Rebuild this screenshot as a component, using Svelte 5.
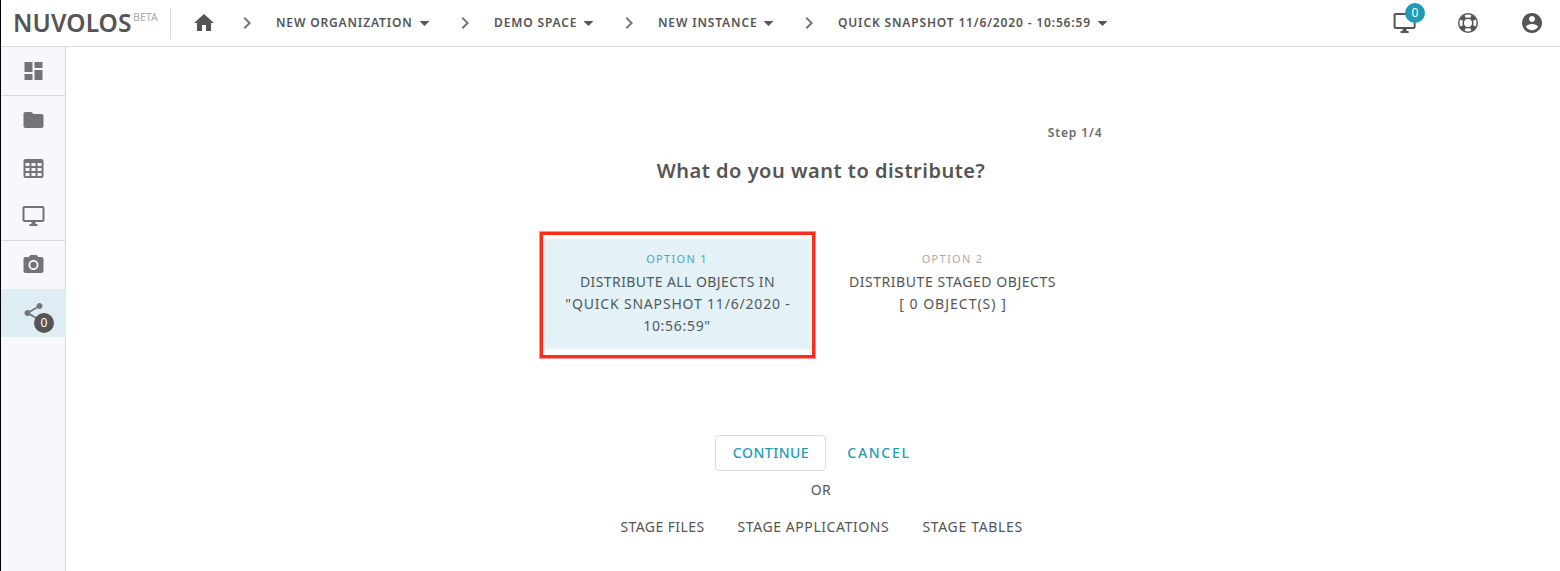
<script>
  const paths = {
    home: 'M10 20v-6h4v6h5v-8h3L12 3 2 12h3v8z',
    chevron: 'M10 6 8.59 7.41 13.17 12l-4.58 4.59L10 18l6-6z',
    caret: 'M7 10l5 5 5-5z',
    monitor: 'M21 2H3c-1.1 0-2 .9-2 2v12c0 1.1.9 2 2 2h7v2H8v2h8v-2h-2v-2h7c1.1 0 2-.9 2-2V4c0-1.1-.9-2-2-2zm0 14H3V4h18v12z',
    lifebuoy: 'M19.79,15.41C20.74,13.24 20.74,10.75 19.79,8.59L17.05,9.83C17.65,11.21 17.65,12.78 17.06,14.17L19.79,15.41M15.42,4.21C13.25,3.26 10.76,3.26 8.59,4.21L9.83,6.94C11.22,6.35 12.79,6.35 14.18,6.95L15.42,4.21M4.21,8.58C3.26,10.76 3.26,13.24 4.21,15.42L6.95,14.17C6.35,12.79 6.35,11.21 6.95,9.82L4.21,8.58M8.59,19.79C10.76,20.74 13.25,20.74 15.42,19.78L14.18,17.05C12.8,17.65 11.22,17.65 9.84,17.06L8.59,19.79M12,2A10,10 0 0,1 22,12A10,10 0 0,1 12,22A10,10 0 0,1 2,12A10,10 0 0,1 12,2M12,8A4,4 0 0,0 8,12A4,4 0 0,0 12,16A4,4 0 0,0 16,12A4,4 0 0,0 12,8Z',
    account: 'M12 2C6.48 2 2 6.48 2 12s4.48 10 10 10 10-4.48 10-10S17.52 2 12 2zm0 3c1.66 0 3 1.34 3 3s-1.34 3-3 3-3-1.34-3-3 1.34-3 3-3zm0 14.2c-2.5 0-4.71-1.28-6-3.22.03-1.99 4-3.08 6-3.08 1.99 0 5.97 1.09 6 3.08-1.29 1.94-3.5 3.22-6 3.22z',
    dashboard: 'M3 13h8V3H3v10zm0 8h8v-6H3v6zm10 0h8V11h-8v10zm0-18v6h8V3h-8z',
    folder: 'M10 4H4c-1.1 0-1.99.9-1.99 2L2 18c0 1.1.9 2 2 2h16c1.1 0 2-.9 2-2V8c0-1.1-.9-2-2-2h-8l-2-2z',
    table: 'M4 3h16a2 2 0 0 1 2 2v15a2 2 0 0 1-2 2H4a2 2 0 0 1-2-2V5a2 2 0 0 1 2-2zM4 7v3h4V7zm6 0v3h4V7zm6 0v3h4V7zM4 12v3h4v-3zm6 0v3h4v-3zm6 0v3h4v-3zM4 17v3h4v-3zm6 0v3h4v-3zm6 0v3h4v-3z',
    camera: 'M9 2L7.17 4H4c-1.1 0-2 .9-2 2v12c0 1.1.9 2 2 2h16c1.1 0 2-.9 2-2V6c0-1.1-.9-2-2-2h-3.17L15 2H9zm3 15c-2.76 0-5-2.24-5-5s2.24-5 5-5 5 2.24 5 5-2.24 5-5 5zM12 8.8a3.2 3.2 0 1 0 0 6.4a3.2 3.2 0 1 0 0-6.4z',
    share: 'M18 16.08c-.76 0-1.44.3-1.96.77L8.91 12.7c.05-.23.09-.46.09-.7s-.04-.47-.09-.7l7.05-4.11c.54.5 1.25.81 2.04.81 1.66 0 3-1.34 3-3s-1.34-3-3-3-3 1.34-3 3c0 .24.04.47.09.7L8.04 9.81C7.5 9.31 6.79 9 6 9c-1.66 0-3 1.34-3 3s1.34 3 3 3c.79 0 1.5-.31 2.04-.81l7.12 4.16c-.05.21-.08.43-.08.65 0 1.61 1.31 2.92 2.92 2.92s2.92-1.31 2.92-2.92-1.31-2.92-2.92-2.92z'
  };

  const crumbs = [
    { label: 'NEW ORGANIZATION', cls: 'org' },
    { label: 'DEMO SPACE', cls: 'space' },
    { label: 'NEW INSTANCE', cls: 'instance' },
    { label: 'QUICK SNAPSHOT 11/6/2020 - 10:56:59', cls: 'snapshot' }
  ];

  const nav = [
    { icon: 'dashboard', divided: true },
    { icon: 'folder' },
    { icon: 'table' },
    { icon: 'monitor', divided: true },
    { icon: 'camera' },
    { icon: 'share', active: true, badge: 0 }
  ];
</script>

{#snippet icon(name)}
  <svg class="icon" viewBox="0 0 24 24" aria-hidden="true"><path fill-rule="evenodd" d={paths[name]} /></svg>
{/snippet}

<div class="app">
  <header>
    <div class="brand"><span class="name">NUVOLOS</span><span class="beta">BETA</span></div>
    <a class="home" href="#home" aria-label="Home">{@render icon('home')}</a>
    <nav class="crumbs">
      {#each crumbs as c}
        <div class="crumb {c.cls}">
          {@render icon('chevron')}
          <span class="label">{c.label}</span>
          {@render icon('caret')}
        </div>
      {/each}
    </nav>
    <div class="actions">
      <span class="action screens">{@render icon('monitor')}<b class="badge teal">0</b></span>
      <span class="action">{@render icon('lifebuoy')}</span>
      <span class="action">{@render icon('account')}</span>
    </div>
  </header>

  <div class="body">
    <aside>
      {#each nav as n}
        <div class="item" class:divided={n.divided} class:active={n.active}>
          <span class="action">
            {@render icon(n.icon)}
            {#if n.badge !== undefined}<b class="badge dark">{n.badge}</b>{/if}
          </span>
        </div>
      {/each}
    </aside>

    <main>
      <div class="step"><span>Step 1/4</span></div>
      <h1>What do you want to distribute?</h1>

      <div class="options">
        <div class="frame">
          <div class="option selected">
            <small>OPTION 1</small>
            <p class="o1a">DISTRIBUTE ALL OBJECTS IN</p>
            <p class="o1b">"QUICK SNAPSHOT 11/6/2020 -</p>
            <p class="o1c">10:56:59"</p>
          </div>
        </div>
        <div class="option second">
          <small>OPTION 2</small>
          <p class="o2a">DISTRIBUTE STAGED OBJECTS</p>
          <p class="o2b">[ 0 OBJECT(S) ]</p>
        </div>
      </div>

      <div class="buttons">
        <button class="continue">CONTINUE</button>
        <button class="cancel">CANCEL</button>
      </div>
      <div class="or">OR</div>
      <div class="stages">
        <span class="files">STAGE FILES</span>
        <span class="apps">STAGE APPLICATIONS</span>
        <span class="tables">STAGE TABLES</span>
      </div>
    </main>
  </div>
</div>

<style>
  :global(body) { margin: 0; background: #fff; }
  .app {
    box-sizing: border-box;
    width: 1560px;
    height: 571px;
    overflow: hidden;
    border-left: 1px solid #000;
    display: flex;
    flex-direction: column;
    font-family: "Noto Sans", "Open Sans", sans-serif;
    font-size: 14px;
    color: #555;
    white-space: nowrap;
  }
  .icon { display: block; flex: none; width: 24px; height: 24px; fill: currentColor; }

  header {
    box-sizing: border-box;
    flex: none;
    height: 47px;
    border-bottom: 1px solid #dcdcdc;
    display: flex;
    align-items: center;
  }
  .brand {
    box-sizing: border-box;
    width: 170px;
    height: 31px;
    padding-left: 12px;
    border-right: 1px solid #dcdcdc;
    display: flex;
    align-items: flex-start;
  }
  .name { width: 120px; font-size: 24.5px; line-height: 29px; font-weight: 600; letter-spacing: 0.1px; }
  .beta { font-size: 10.5px; line-height: 19px; color: #aaa; letter-spacing: 0.1px; }
  .home { color: #555; margin: 0 19px 0 21px; }
  .crumbs { display: flex; }
  .crumb { display: flex; align-items: center; height: 24px; }
  .crumb .label {
    flex: 1;
    margin-left: 17px;
    font-size: 12px;
    line-height: 24px;
    font-weight: 600;
    letter-spacing: 0.85px;
  }
  .crumb .icon:first-child { color: #777; }
  .org { width: 218px; }
  .space { width: 164px; }
  .instance { width: 180px; }
  .snapshot { width: 309px; }
  .crumb .icon:last-child { margin-right: 16px; transform: translateX(-0.5px); }
  .snapshot .icon:last-child { margin-right: 0; }
  .actions { margin-left: auto; margin-right: 16px; display: flex; gap: 40px; }
  .screens .icon { transform: translateX(0.6px); }

  .action { position: relative; display: block; }
  .badge {
    position: absolute;
    width: 20px;
    height: 20px;
    border-radius: 50%;
    color: #fff;
    font-size: 12px;
    line-height: 20px;
    font-weight: 400;
    text-align: center;
  }
  .teal { left: 13px; top: -8px; background: #1f9bb6; }
  .dark { left: 13px; top: 12px; background: #555; }

  .body { flex: 1; display: flex; min-height: 0; }
  aside {
    box-sizing: border-box;
    width: 65px;
    flex: none;
    background: #f6f8fb;
    border-right: 1px solid #d8d8d8;
    color: #737477;
  }
  .item { height: 48px; display: flex; align-items: center; justify-content: center; }
  .item .icon { transform: translateX(0.5px); }
  .divided { border-bottom: 1px solid #d8d8d8; }
  .active { background: #deedf4; margin-right: -1px; padding-right: 1px; }

  main { flex: 1; display: flex; flex-direction: column; align-items: center; padding: 76px 0 0 15px; }
  .step {
    width: 564px;
    height: 20px;
    line-height: 20px;
    text-align: right;
    font-size: 12px;
    font-weight: 600;
    letter-spacing: 0.9px;
    color: #6a6a6a;
  }
  h1 {
    margin: 10px 0 0;
    padding-left: 1px;
    font-size: 20px;
    line-height: 36px;
    font-weight: 600;
    letter-spacing: 0.5px;
  }
  .options { display: flex; width: 564px; margin-top: 42px; }
  .frame {
    box-sizing: border-box;
    width: 275px;
    height: 126px;
    margin: 1px;
    border: 3px solid #fc2d1d;
    box-shadow: 0 0 0 1px rgba(252, 45, 29, 0.5);
    padding-top: 4px;
  }
  .option { text-align: center; }
  .option small { display: block; font-size: 11px; line-height: 20px; height: 22px; letter-spacing: 1.3px; color: #aaa; }
  .option p { margin: 0; line-height: 22px; }
  .option .o1a { letter-spacing: 0.42px; padding-left: 1px; }
  .option .o1b { letter-spacing: 0.82px; padding-left: 2px; }
  .option .o1c { letter-spacing: 0.7px; }
  .option .o2a { letter-spacing: 0.55px; }
  .option .o2b { letter-spacing: 1px; padding-left: 1px; }
  .selected { box-sizing: border-box; height: 110px; padding-top: 10px; background: #e4f1f6; color: #4f5a5e; }
  .selected small { color: #41abc5; }
  .second { width: 274px; padding-top: 18px; }
  .buttons { display: flex; margin-top: 76px; width: 212px; }
  button {
    box-sizing: border-box;
    flex: none;
    height: 36px;
    padding: 0 0 2px;
    background: none;
    border: 0;
    color: #1f9bb6;
    font: 500 14px "Noto Sans", "Open Sans", sans-serif;
    text-align: center;
  }
  .continue {
    width: 111px;
    padding-left: 2px;
    border: 1px solid #dcdcdc;
    border-radius: 4px;
    letter-spacing: 0.5px;
  }
  .cancel { width: 107px; letter-spacing: 1.7px; }
  .or { margin-top: 9px; padding-left: 1px; line-height: 20px; letter-spacing: 0.4px; }
  .stages { display: flex; width: 400px; margin-top: 17px; line-height: 20px; }
  .stages span { flex: none; }
  .files { width: 117px; letter-spacing: 0.4px; }
  .apps { width: 185px; letter-spacing: 0.58px; }
  .tables { letter-spacing: 0.65px; }
</style>
